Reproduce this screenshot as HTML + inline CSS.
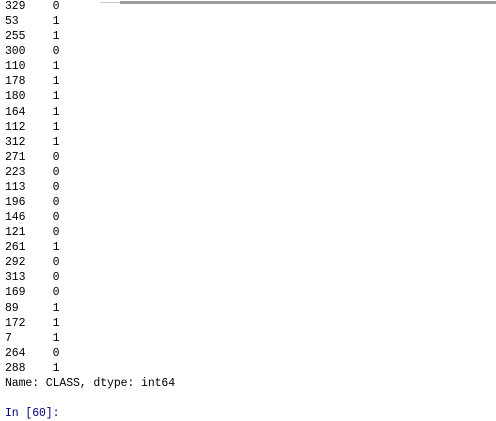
<!DOCTYPE html>
<html><head><style>
html,body{margin:0;padding:0;background:#fff;width:496px;height:421px;overflow:hidden;position:relative}
pre{position:absolute;left:5px;top:-1px;margin:0;font-family:"Liberation Mono",monospace;font-size:11.5px;letter-spacing:-0.1px;line-height:15.08px;color:#000}
.l1{position:absolute;left:100px;top:2px;width:20px;height:1px;background:#c8c8c8}
.l2{position:absolute;left:120px;top:1px;width:376px;height:3px;background:#9a9a9a}
.p{color:#000080}
</style></head><body>
<div class="l1"></div><div class="l2"></div>
<pre>329    0
53     1
255    1
300    0
110    1
178    1
180    1
164    1
112    1
312    1
271    0
223    0
113    0
196    0
146    0
121    0
261    1
292    0
313    0
169    0
89     1
172    1
7      1
264    0
288    1
Name: CLASS, dtype: int64

<span class="p">In [60]:</span></pre>
</body></html>
